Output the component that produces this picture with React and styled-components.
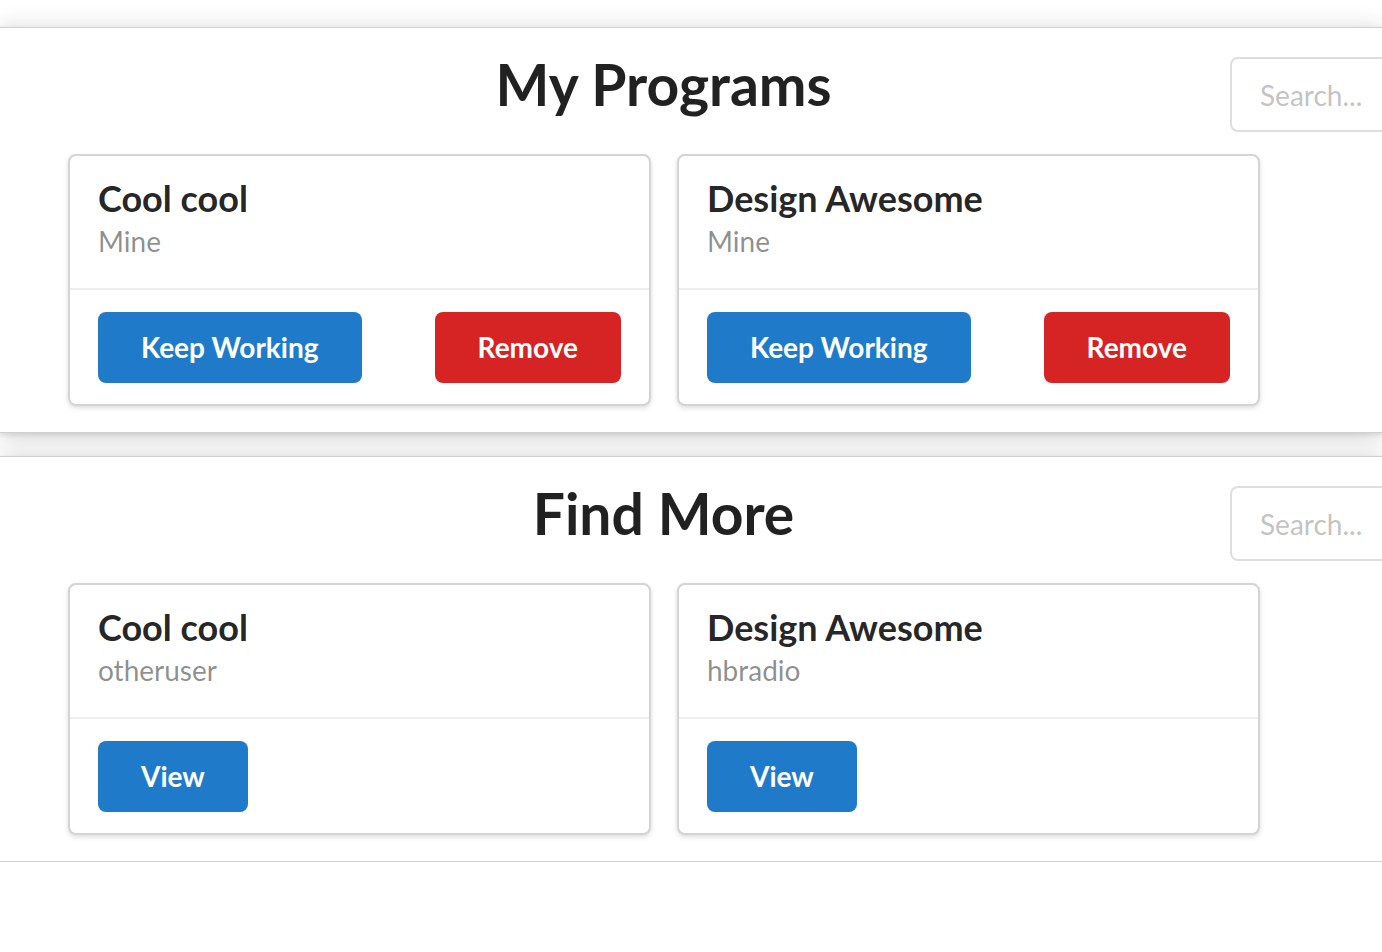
import React from "react";
import styled, { createGlobalStyle } from "styled-components";

const GlobalStyle = createGlobalStyle`
  html, body {
    margin: 0;
    padding: 0;
    background: #ffffff;
    overflow-x: hidden;
  }
  body {
    font-family: Lato, "Open Sans", "Liberation Sans", sans-serif;
    color: rgba(0, 0, 0, 0.87);
  }
`;

const Page = styled.div`
  padding-top: 27px;
  display: flex;
  flex-direction: column;
  gap: 23px;
`;

const Segment = styled.section`
  background: #ffffff;
  border-top: 1px solid #d0d0d2;
  border-bottom: 1px solid #d0d0d2;
  box-shadow: 0 3px 22px rgba(34, 36, 38, 0.22), 0 2px 4px rgba(34, 36, 38, 0.1);
  padding: 0 0 26px 68px;
  overflow: hidden;
`;

const Header = styled.div`
  display: grid;
  grid-template-columns: 1162px 29px 260px;
  padding-top: 25px;
  align-items: start;
`;

const Title = styled.h1`
  grid-column: 1 / 3;
  grid-row: 1;
  margin: 3px 0 0;
  font-size: 57px;
  line-height: 56px;
  font-weight: 700;
  text-align: center;
  color: rgba(0, 0, 0, 0.87);
`;

const Search = styled.input`
  grid-column: 2 / 4;
  grid-row: 1;
  margin-top: 4px;
  height: 75px;
  box-sizing: border-box;
  border: 2px solid rgba(34, 36, 38, 0.15);
  border-radius: 8px;
  padding: 0 28px;
  font-family: inherit;
  font-size: 28px;
  color: rgba(0, 0, 0, 0.87);
  background: #fff;
  outline: none;
  &::placeholder {
    color: rgba(191, 191, 191, 0.95);
  }
`;

const Cards = styled.div`
  display: flex;
  gap: 26px;
  margin-top: 22px;
`;

const Card = styled.div`
  width: 583px;
  height: 252px;
  box-sizing: border-box;
  border: 2px solid #d4d4d5;
  border-radius: 8px;
  box-shadow: 0 2px 5px #dcdcdd;
  background: #fff;
  display: flex;
  flex-direction: column;
`;

const Content = styled.div`
  padding: 19px 28px 27px;
  border-bottom: 2px solid #eeeeee;
`;

const CardTitle = styled.div`
  font-size: 36px;
  line-height: 46px;
  font-weight: 700;
  color: rgba(0, 0, 0, 0.87);
`;

const Meta = styled.div`
  font-size: 28px;
  line-height: 40px;
  color: rgba(0, 0, 0, 0.45);
`;

const Actions = styled.div`
  display: flex;
  justify-content: space-between;
  padding: 22px 28px 0;
`;

const Button = styled.button`
  border: none;
  border-radius: 8px;
  padding: 22px 43px;
  font-family: inherit;
  font-size: 28px;
  line-height: 27px;
  font-weight: 700;
  color: #ffffff;
  background: ${(p) => (p.$danger ? "#d62324" : "#1f7bc9")};
  cursor: pointer;
`;

const mine = [
  { name: "Cool cool", owner: "Mine" },
  { name: "Design Awesome", owner: "Mine" },
];

const others = [
  { name: "Cool cool", owner: "otheruser" },
  { name: "Design Awesome", owner: "hbradio" },
];

function ProgramCard({ program, owned }) {
  return (
    <Card>
      <Content>
        <CardTitle>{program.name}</CardTitle>
        <Meta>{program.owner}</Meta>
      </Content>
      <Actions>
        {owned ? (
          <>
            <Button>Keep Working</Button>
            <Button $danger>Remove</Button>
          </>
        ) : (
          <Button>View</Button>
        )}
      </Actions>
    </Card>
  );
}

function ProgramSection({ title, programs, owned }) {
  return (
    <Segment>
      <Header>
        <Title>{title}</Title>
        <Search placeholder="Search..." />
      </Header>
      <Cards>
        {programs.map((p, i) => (
          <ProgramCard key={i} program={p} owned={owned} />
        ))}
      </Cards>
    </Segment>
  );
}

export default function App() {
  return (
    <>
      <GlobalStyle />
      <Page>
        <ProgramSection title="My Programs" programs={mine} owned />
        <ProgramSection title="Find More" programs={others} />
      </Page>
    </>
  );
}
